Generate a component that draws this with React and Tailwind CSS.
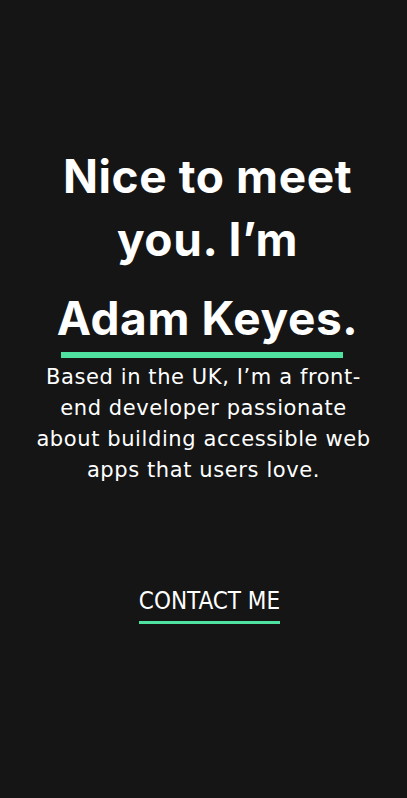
export default function App() {
  return (
    <div className="min-h-screen w-full bg-[#151515] text-white flex flex-col items-center">
      {/* Hero heading */}
      <h1 className="mt-[145px] ml-[8px] text-center font-['Inter',sans-serif] font-bold text-[46px] leading-[63px] tracking-[0.6px]">
        <span className="block">Nice to meet</span>
        <span className="block">you. I’m</span>
        <span className="block mt-[16px]">Adam Keyes.</span>
      </h1>
      <div className="mt-[2px] mr-[4px] h-[6px] w-[282px] bg-[#4EE1A0]" />

      <p className="mt-[4px] px-[10px] text-center font-['DejaVu_Sans',sans-serif] text-[21px] leading-[31px] tracking-[0.6px]">
        Based in the UK, I’m a front-
        <br />
        end developer passionate
        <br />
        about building accessible web
        <br />
        apps that users love.
      </p>

      {/* Contact link */}
      <a
        href="#contact"
        className="mt-[101px] ml-[12px] inline-block border-b-[3px] border-[#4EE1A0] pb-[6px] font-['DejaVu_Sans_Condensed','DejaVu_Sans',sans-serif] text-[24px] leading-[28px]"
      >
        CONTACT ME
      </a>
    </div>
  );
}
